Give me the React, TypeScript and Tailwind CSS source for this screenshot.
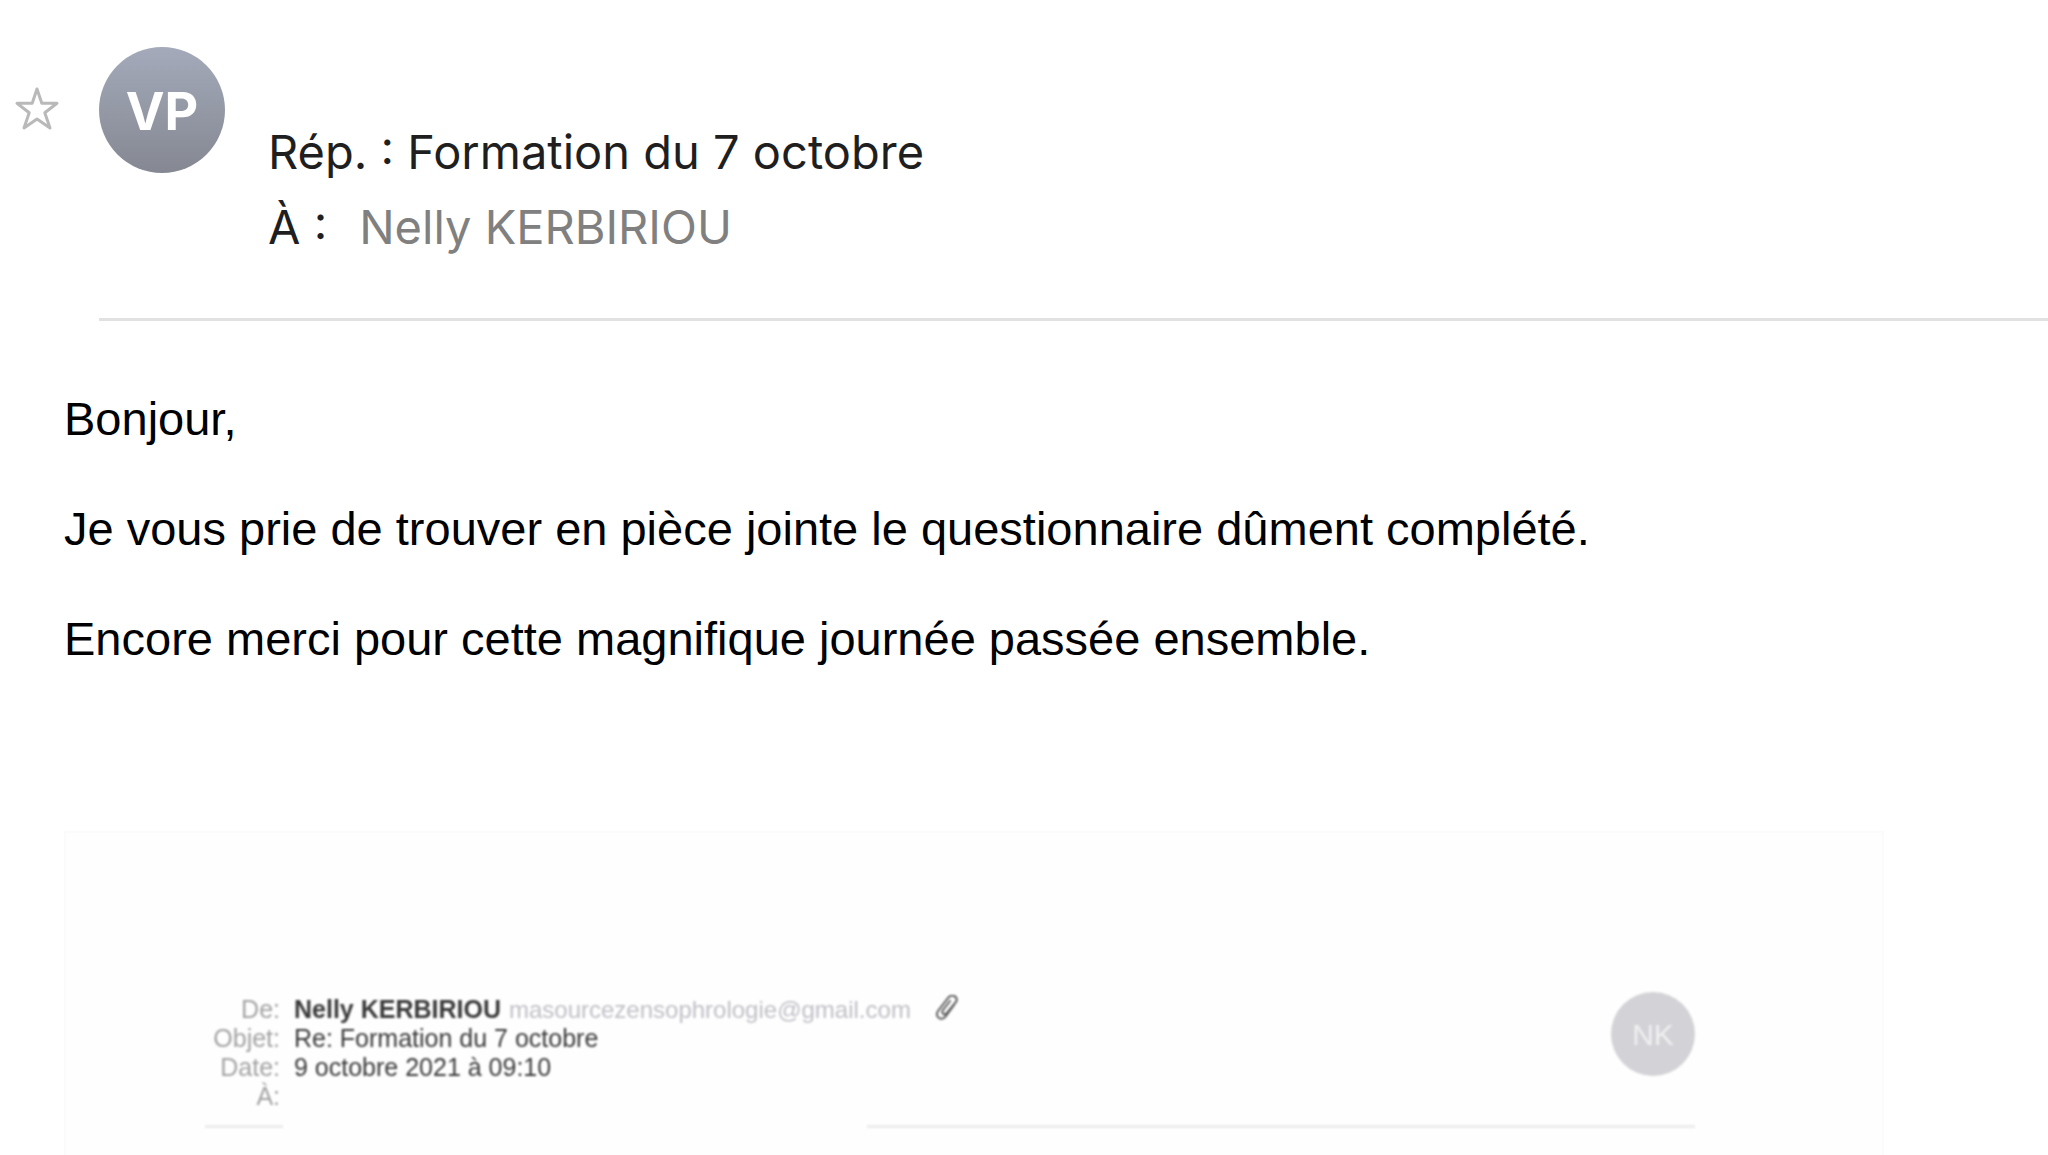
import { useState } from 'react';

type Field = { label: string; value: string; strong?: boolean; email?: string };

const QUOTED_FIELDS: Field[] = [
  {
    label: 'De:',
    value: 'Nelly KERBIRIOU',
    strong: true,
    email: 'masourcezensophrologie@gmail.com',
  },
  { label: 'Objet:', value: 'Re: Formation du 7 octobre' },
  { label: 'Date:', value: '9 octobre 2021 à 09:10' },
  { label: 'À:', value: '' },
];

const PARAGRAPHS = [
  'Bonjour,',
  'Je vous prie de trouver en pièce jointe le questionnaire dûment complété.',
  'Encore merci pour cette magnifique journée passée ensemble.',
];

function StarIcon({ filled }: { filled: boolean }) {
  return (
    <svg
      viewBox="0 0 46 46"
      className="h-[46px] w-[46px]"
      fill={filled ? '#b9b9b9' : 'none'}
      stroke="#b9b9b9"
      strokeWidth="3"
      strokeLinejoin="round"
    >
      <path d="M23 3 L27.8 17.3 L43 17.3 L30.8 26.8 L36 42 L23 33 L10 42 L15.2 26.8 L3 17.3 L18.2 17.3 Z" />
    </svg>
  );
}

function PaperclipIcon() {
  return (
    <svg
      viewBox="0 0 24 28"
      className="h-7 w-6 shrink-0"
      fill="none"
      stroke="#5c5c5c"
      strokeWidth="2"
      strokeLinecap="round"
    >
      <path d="M19 10 L11 21 C7 27 -1 22 3 16 L13 3 C17 -2 24 2 21 7 L12 18 C9 21 6 18 8 15 L15 6" />
    </svg>
  );
}

function MessageHeader() {
  const [starred, setStarred] = useState(false);

  return (
    <header className="flex pl-[14px]">
      <button
        type="button"
        aria-label="Marquer le message"
        aria-pressed={starred}
        onClick={() => setStarred(!starred)}
        className="mt-[86px] h-[46px] shrink-0"
      >
        <StarIcon filled={starred} />
      </button>
      <div className="ml-[39px] flex min-w-0 flex-1 items-start border-b-[3px] border-[#e1e1e1] pb-[54px]">
        <div className="mt-[47px] flex h-[126px] w-[126px] shrink-0 items-center justify-center rounded-full bg-linear-to-b from-[#a4aaba] to-[#858892] pt-1 text-[52px] font-bold text-white">
          VP
        </div>
        <div className="mt-[114px] ml-[43px] text-[47px] leading-[75px] text-[#1f1f1f]">
          <h1>Rép. : Formation du 7 octobre</h1>
          <p className="flex gap-8">
            <span>À :</span>
            <span className="text-[#808080]">Nelly KERBIRIOU</span>
          </p>
        </div>
      </div>
    </header>
  );
}

function QuotedMessage() {
  return (
    <section className="mr-[164px] ml-16 flex-1 border-2 border-b-0 border-[#fbfbfb] bg-[#fefefe] pt-[159px] pr-[187px] pl-[139px]">
      <div className="blur-[1px]">
        <div className="flex items-start justify-between">
          <dl className="mt-[3px] text-[25px] leading-[29px]">
            {QUOTED_FIELDS.map((field) => (
              <div key={field.label} className="flex gap-[14px]">
                <dt className="w-[75px] text-right text-[#a3a3a3]">{field.label}</dt>
                <dd className="flex text-[#3a3a3a]">
                  <span className={field.strong ? 'font-bold' : ''}>{field.value}</span>
                  {field.email && (
                    <>
                      <a
                        href={`mailto:${field.email}`}
                        className="ml-2 text-[24px] text-[#bfbfc6]"
                      >
                        {field.email}
                      </a>
                      <span className="ml-6">
                        <PaperclipIcon />
                      </span>
                    </>
                  )}
                </dd>
              </div>
            ))}
          </dl>
          <div className="flex h-[84px] w-[84px] items-center justify-center rounded-full bg-[#d3d3d7] text-[30px] text-[#f0f0f2]">
            NK
          </div>
        </div>
        {/* the recipient is masked, so the rule is interrupted below it */}
        <div className="mt-[14px] flex gap-[584px]">
          <div className="h-[3px] w-[78px] bg-[#ececec]" />
          <div className="h-[3px] flex-1 bg-[#ececec]" />
        </div>
      </div>
    </section>
  );
}

export default function App() {
  return (
    <main className="flex min-h-screen flex-col bg-white font-['Inter',sans-serif]">
      <MessageHeader />
      <div className="flex flex-1 flex-col font-['Liberation_Sans',Arial,sans-serif]">
        <div className="space-y-[55px] pt-[70px] pb-[165px] pl-16 text-[47px] leading-[55px] text-black">
          {PARAGRAPHS.map((text) => (
            <p key={text}>{text}</p>
          ))}
        </div>
        <QuotedMessage />
      </div>
    </main>
  );
}
